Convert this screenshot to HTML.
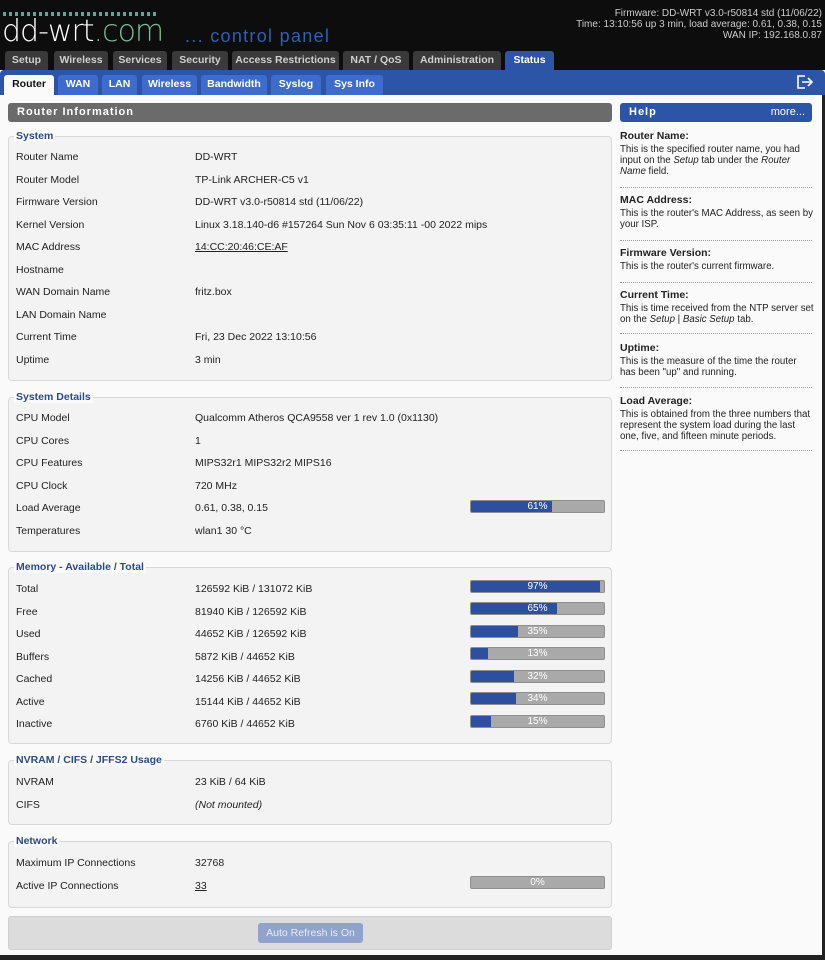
<!DOCTYPE html>
<html><head><meta charset="utf-8"><style>
*{margin:0;padding:0;box-sizing:border-box}
body{width:825px;height:960px;background:#fafafa;font-family:"Liberation Sans",Tahoma,sans-serif;font-size:10.5px;color:#222;position:relative;overflow:hidden}
.a{position:absolute;white-space:nowrap}
#hdr{position:absolute;left:0;top:0;width:825px;height:70px;background:#0d0d0d}
.tt{position:absolute;top:51px;height:19px;background:#3a3a3a;color:#cfcfcf;font-weight:bold;font-size:10.5px;text-align:center;line-height:19px;border-radius:3px 3px 0 0}
#bar{position:absolute;left:0;top:70px;width:825px;height:25px;background:#2c55a8;border-radius:4px 4px 0 0}
.st{position:absolute;top:75px;height:20px;background:#3d6ccc;color:#fff;font-weight:bold;font-size:10.5px;text-align:center;line-height:19px;border-radius:3px 3px 0 0}
.fs{position:absolute;left:8px;width:604px;background:#f3f3f3;border:1px solid #d8d8d8;border-radius:4px}
.lg{position:absolute;left:14px;color:#2b4a8a;font-weight:bold;font-size:10.5px;background:#fafafa;padding:0 2px;line-height:12px}
.bar{position:absolute;left:470px;width:135px;height:13px;background:#a9a9a9;border:1px solid #8f8f8f;border-radius:2px;overflow:hidden}
.bar i{position:absolute;left:0;top:0;bottom:0;background:#2c4fa0}
.bar b{position:absolute;left:0;right:0;top:0;text-align:center;color:#fff;font-weight:normal;font-size:10px;line-height:11px}
.hp h4{font-size:10.5px;font-weight:bold;margin-bottom:2px;line-height:12px}
.hp p{font-size:9.7px;line-height:11px;white-space:normal}
.hp .t{position:absolute;left:620px;width:194px}
.hp .s{position:absolute;left:620px;width:192px;border-top:1px dotted #999}
</style></head><body>
<div id="hdr"></div>
<div class="a" style="left:3px;top:12px;width:155px;height:4px;background:repeating-linear-gradient(90deg,#5a9 0 3px,transparent 3px 6px)"></div>
<div class="a" style="left:2px;top:14px;font-size:30px;color:#fff;letter-spacing:-1px;font-family:'DejaVu Sans',sans-serif;font-weight:200">dd-wrt<span style="color:#7fb89a">.com</span></div>
<div class="a" style="left:185px;top:26px;font-size:18px;color:#2f5fb8;letter-spacing:1.3px">... control panel</div>
<div class="a" style="right:3px;top:8px;color:#ccc;font-size:10px;text-align:right;line-height:11px">Firmware: DD-WRT v3.0-r50814 std (11/06/22)<br>Time: 13:10:56 up 3 min, load average: 0.61, 0.38, 0.15<br>WAN IP: 192.168.0.87</div>
<div class="tt" style="left:5px;width:43px">Setup</div>
<div class="tt" style="left:54px;width:54px">Wireless</div>
<div class="tt" style="left:113px;width:54px">Services</div>
<div class="tt" style="left:172px;width:56px">Security</div>
<div class="tt" style="left:232px;width:107px">Access Restrictions</div>
<div class="tt" style="left:343px;width:66px">NAT / QoS</div>
<div class="tt" style="left:413px;width:88px">Administration</div>
<div class="tt" style="left:505px;width:49px;background:#2c55a8;color:#fff">Status</div>
<div id="bar"></div>
<div class="st" style="left:4px;width:50px;background:#fafafa;color:#111">Router</div>
<div class="st" style="left:58px;width:40px">WAN</div>
<div class="st" style="left:102px;width:35px">LAN</div>
<div class="st" style="left:142px;width:55px">Wireless</div>
<div class="st" style="left:201px;width:66px">Bandwidth</div>
<div class="st" style="left:271px;width:50px">Syslog</div>
<div class="st" style="left:326px;width:57px">Sys Info</div>
<svg class="a" style="left:796px;top:74px" width="18" height="16" viewBox="0 0 18 16"><path d="M9 2H2v12h7M6 8h10M12 4l4 4-4 4" fill="none" stroke="#fff" stroke-width="1.6"/></svg>
<div class="a" style="left:822px;top:95px;width:3px;height:865px;background:#222"></div>
<div class="a" style="left:0;top:955px;width:825px;height:5px;background:#222"></div>

<div class="a" style="left:8px;top:103px;width:604px;height:19px;background:#6b6b6b;border-radius:3px;color:#fff;font-weight:bold;letter-spacing:1px;line-height:19px;padding-left:9px;font-size:11px">Router Information</div>
<div class="a" style="left:620px;top:103px;width:192px;height:19px;background:#2c55a8;border-radius:3px;color:#fff;font-weight:bold;line-height:19px;padding-left:9px;font-size:11px;letter-spacing:1px">Help<span style="position:absolute;right:7px;font-weight:normal;letter-spacing:0">more...</span></div>

<div class="fs" style="top:136px;height:245px"></div><div class="lg a" style="top:130px">System</div>
<div class="fs" style="top:397px;height:155px"></div><div class="lg a" style="top:391px">System Details</div>
<div class="fs" style="top:567px;height:177px"></div><div class="lg a" style="top:561px">Memory - Available / Total</div>
<div class="fs" style="top:760px;height:65px"></div><div class="lg a" style="top:754px">NVRAM / CIFS / JFFS2 Usage</div>
<div class="fs" style="top:841px;height:67px"></div><div class="lg a" style="top:835px">Network</div>
<div class="a" style="left:8px;top:916px;width:604px;height:34px;background:#dcdcdc;border:1px solid #d0d0d0;border-radius:3px"></div>
<div class="a" style="left:258px;top:923px;width:105px;height:20px;background:#8fa3cc;border-radius:3px;color:#e8ecf5;text-align:center;line-height:20px">Auto Refresh is On</div>

<div class="a" style="left:16px;top:146px;line-height:22.5px">Router Name<br>Router Model<br>Firmware Version<br>Kernel Version<br>MAC Address<br>Hostname<br>WAN Domain Name<br>LAN Domain Name<br>Current Time<br>Uptime</div>
<div class="a" style="left:195px;top:146px;line-height:22.5px">DD-WRT<br>TP-Link ARCHER-C5 v1<br>DD-WRT v3.0-r50814 std (11/06/22)<br>Linux 3.18.140-d6 #157264 Sun Nov 6 03:35:11 -00 2022 mips<br><u>14:CC:20:46:CE:AF</u><br>&nbsp;<br>fritz.box<br>&nbsp;<br>Fri, 23 Dec 2022 13:10:56<br>3 min</div>

<div class="a" style="left:16px;top:407px;line-height:22.5px">CPU Model<br>CPU Cores<br>CPU Features<br>CPU Clock<br>Load Average<br>Temperatures</div>
<div class="a" style="left:195px;top:407px;line-height:22.5px">Qualcomm Atheros QCA9558 ver 1 rev 1.0 (0x1130)<br>1<br>MIPS32r1 MIPS32r2 MIPS16<br>720 MHz<br>0.61, 0.38, 0.15<br>wlan1 30 °C</div>
<div class="bar" style="top:500px"><i style="width:61%"></i><b>61%</b></div>

<div class="a" style="left:16px;top:578px;line-height:22.5px">Total<br>Free<br>Used<br>Buffers<br>Cached<br>Active<br>Inactive</div>
<div class="a" style="left:195px;top:578px;line-height:22.5px">126592 KiB / 131072 KiB<br>81940 KiB / 126592 KiB<br>44652 KiB / 126592 KiB<br>5872 KiB / 44652 KiB<br>14256 KiB / 44652 KiB<br>15144 KiB / 44652 KiB<br>6760 KiB / 44652 KiB</div>
<div class="bar" style="top:580px"><i style="width:97%"></i><b>97%</b></div>
<div class="bar" style="top:602px"><i style="width:65%"></i><b>65%</b></div>
<div class="bar" style="top:625px"><i style="width:35%"></i><b>35%</b></div>
<div class="bar" style="top:647px"><i style="width:13%"></i><b>13%</b></div>
<div class="bar" style="top:670px"><i style="width:32%"></i><b>32%</b></div>
<div class="bar" style="top:692px"><i style="width:34%"></i><b>34%</b></div>
<div class="bar" style="top:715px"><i style="width:15%"></i><b>15%</b></div>

<div class="a" style="left:16px;top:771px;line-height:22.5px">NVRAM<br>CIFS</div>
<div class="a" style="left:195px;top:771px;line-height:22.5px">23 KiB / 64 KiB<br><i>(Not mounted)</i></div>

<div class="a" style="left:16px;top:852px;line-height:22.5px">Maximum IP Connections<br>Active IP Connections</div>
<div class="a" style="left:195px;top:852px;line-height:22.5px">32768<br><u>33</u></div>
<div class="bar" style="top:876px"><b>0%</b></div>

<div class="hp">
<div class="t" style="top:130px"><h4>Router Name:</h4><p>This is the specified router name, you had input on the <i>Setup</i> tab under the <i>Router Name</i> field.</p></div>
<div class="s" style="top:187px"></div>
<div class="t" style="top:194px"><h4>MAC Address:</h4><p>This is the router's MAC Address, as seen by your ISP.</p></div>
<div class="s" style="top:240px"></div>
<div class="t" style="top:247px"><h4>Firmware Version:</h4><p>This is the router's current firmware.</p></div>
<div class="s" style="top:282px"></div>
<div class="t" style="top:289px"><h4>Current Time:</h4><p>This is time received from the NTP server set on the <i>Setup</i> | <i>Basic Setup</i> tab.</p></div>
<div class="s" style="top:333px"></div>
<div class="t" style="top:342px"><h4>Uptime:</h4><p>This is the measure of the time the router has been "up" and running.</p></div>
<div class="s" style="top:387px"></div>
<div class="t" style="top:395px"><h4>Load Average:</h4><p>This is obtained from the three numbers that represent the system load during the last one, five, and fifteen minute periods.</p></div>
<div class="s" style="top:450px"></div>
</div>
</body></html>
